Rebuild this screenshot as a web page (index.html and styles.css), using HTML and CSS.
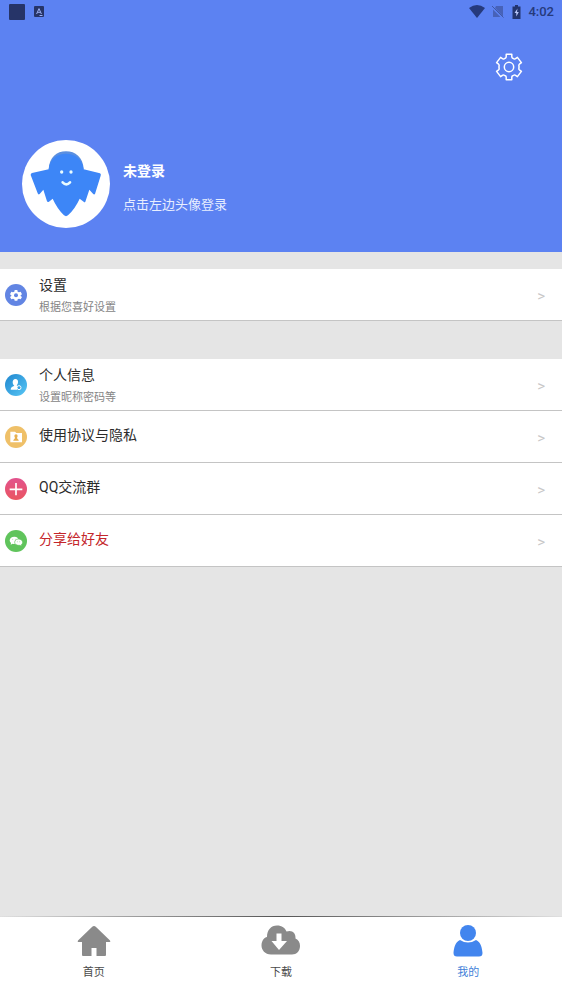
FILE: index.html
```html
<!DOCTYPE html>
<html lang="zh-CN">
<head>
<meta charset="utf-8">
<meta name="viewport" content="width=device-width, initial-scale=1">
<title>我的</title>
<link rel="stylesheet" href="styles.css">
</head>
<body>
<div class="app">
  <header class="hero">
    <div class="status">
      <svg class="status-block" viewBox="0 0 16 16" aria-hidden="true"><rect width="16" height="16" rx="1" fill="#263468"/></svg>
      <svg class="status-app" viewBox="0 0 10 11" aria-hidden="true"><rect width="10" height="11" rx="1" fill="#263468"/><path d="M2.6 8 5 2.6 7.4 8M3.5 6.3h3M5.5 9.5h3" fill="none" stroke="#9db1f4" stroke-width="1"/></svg>
      <span class="spacer"></span>
      <svg class="status-wifi" viewBox="0 0 16 13" aria-hidden="true"><path d="M0 3Q8-3 16 3L8 13Z" fill="#263a7c"/></svg>
      <svg class="status-sim" viewBox="0 0 12 13" aria-hidden="true"><path d="M4 1h7v10.500L3 3Z M1 4.500 8.500 12H1Z" fill="#4762b8"/><path d="M0 1 11.500 12.500" stroke="#4059a6" stroke-width="1"/></svg>
      <svg class="status-battery" viewBox="0 0 9 14" aria-hidden="true"><path d="M3 0h3v1.500h2.500V14H.5V1.500H3Z" fill="#23346f"/><path d="M5.500 3.500 2.500 8h1.800v3.500L6.800 7H5Z" fill="#b7c5f7"/></svg>
      <span class="clock">4:02</span>
    </div>
    <div class="toolbar">
      <button class="gear" type="button" aria-label="设置">
        <svg viewBox="0 0 28 28" fill="none" stroke="#fff" stroke-width="1.500" stroke-linejoin="round" aria-hidden="true"><path d="M11.200 1.300h5.600v2.500q0 1 .9 1.400l1.200.6q.9.500 1.700-.1l1.800-1.300 4 5.200-2 1.600q-.7.600-.5 1.500.2 1.300 0 2.600-.2.900.5 1.500l2 1.600-4 5.200-1.800-1.300q-.8-.6-1.700-.1l-1.200.6q-.9.400-.9 1.400v2.500h-5.600v-2.500q0-1-.9-1.400l-1.200-.6q-.9-.5-1.700.1l-1.800 1.300-4-5.200 2-1.600q.7-.6.500-1.500-.2-1.300 0-2.600.2-.9-.5-1.500l-2-1.600 4-5.200 1.800 1.300q.8.600 1.700.1l1.200-.6q.9-.4.9-1.400Z"/><circle cx="14" cy="14" r="4.700"/></svg>
      </button>
    </div>
    <div class="profile">
      <button class="avatar" type="button" aria-label="登录">
        <svg viewBox="0 5 264 264" aria-hidden="true">
          <circle cx="132" cy="137" r="132" fill="#fff"/>
          <path d="M80 93C82 56 104 39 132 39S183 56 185 93Z" fill="#5a8fe0"/>
          <path d="M80 93C84 60 106 46 132 46S181 60 185 93L234 105Q238 107 236 112L219 167Q216 170 213 166L202 154 190 190Q188 193 185 190L173 181Q160 210 138 231Q132 236 126 231Q105 210 92 181L81 190Q77 193 75 189L64 154 53 167Q49 170 47 165L26 110Q26 106 30 104Z" fill="#3d86f7"/>
          <circle cx="119" cy="101" r="5" fill="#e9fbff"/><circle cx="147" cy="101" r="5" fill="#e9fbff"/>
          <path d="M122 132Q133 144 144 132" fill="none" stroke="#e9fbff" stroke-width="8" stroke-linecap="round"/>
        </svg>
      </button>
      <div class="identity">
        <h1 class="name">未登录</h1>
        <p class="hint">点击左边头像登录</p>
      </div>
    </div>
  </header>

  <main class="content">
    <section class="group">
      <a class="row" href="#settings">
        <svg class="icon" viewBox="0 0 66 66" aria-hidden="true"><circle cx="33" cy="33" r="33" fill="#6285e3"/><path d="M29 18h8l1 5 4 2 5-2 4 8-4 3v2l4 3-4 7-5-2-4 2-1 4h-8l-1-4-4-2-5 2-4-7 4-3v-2l-4-3 4-8 5 2 4-2Z" fill="#fff"/><circle cx="33" cy="34" r="6" fill="#6285e3"/></svg>
        <span class="label label-double"><span class="title">设置</span><span class="sub">根据您喜好设置</span></span>
        <span class="arrow">&gt;</span>
      </a>
    </section>
    <section class="group">
      <a class="row" href="#profile">
        <svg class="icon" viewBox="0 0 66 66" aria-hidden="true"><defs><linearGradient id="sky" x1="0" y1="0" x2="1" y2="1"><stop offset="0" stop-color="#1f86cf"/><stop offset="1" stop-color="#58c7f5"/></linearGradient></defs><circle cx="33" cy="33" r="33" fill="url(#sky)"/><path d="M31 15c6 0 9 4 8 10 0 4-2 7-4 9l3 3-2 10H17q0-6 4-8l7-4c-3-2-5-6-5-10 0-6 3-10 8-10Z" fill="#fff"/><circle cx="42" cy="41" r="6" fill="#37a4e4" stroke="#fff" stroke-width="3"/></svg>
        <span class="label label-double"><span class="title">个人信息</span><span class="sub">设置昵称密码等</span></span>
        <span class="arrow">&gt;</span>
      </a>
      <a class="row" href="#terms">
        <svg class="icon" viewBox="0 0 66 66" aria-hidden="true"><circle cx="33" cy="33" r="33" fill="#efc068"/><path d="M16 17h14l4 4h17v28H16Z" fill="#fff"/><circle cx="33" cy="30" r="5" fill="#e7b04f"/><path d="M30 33h6l1 5 4 4v2H25v-2l4-4Z" fill="#e7b04f"/></svg>
        <span class="label"><span class="title">使用协议与隐私</span></span>
        <span class="arrow">&gt;</span>
      </a>
      <a class="row" href="#group">
        <svg class="icon" viewBox="0 0 66 66" aria-hidden="true"><defs><linearGradient id="rose" x1="0" y1="0" x2="0" y2="1"><stop offset="0" stop-color="#e2528d"/><stop offset="1" stop-color="#ea5661"/></linearGradient></defs><circle cx="33" cy="33" r="33" fill="url(#rose)"/><path d="M33 15v37M14 34h38" stroke="#fff" stroke-width="5"/></svg>
        <span class="label"><span class="title">QQ交流群</span></span>
        <span class="arrow">&gt;</span>
      </a>
      <a class="row" href="#share">
        <svg class="icon" viewBox="0 0 66 66" aria-hidden="true"><circle cx="33" cy="33" r="33" fill="#60c45c"/><path d="M28 20c8 0 13 5 13 11s-5 11-13 11q-3 0-5-1l-6 3 1-5q-4-3-4-8c0-6 6-11 14-11Z" fill="#fff"/><path d="M40 27c7 0 13 4 13 10q0 4-4 7l1 5-5-3h-4c-7 0-12-4-12-9s4-10 11-10Z" fill="#fff" stroke="#60c45c" stroke-width="2"/><g fill="#a5dea2"><circle cx="23" cy="28" r="1.500"/><circle cx="32" cy="28" r="1.500"/><circle cx="37" cy="35" r="1.500"/><circle cx="44" cy="35" r="1.500"/></g></svg>
        <span class="label"><span class="title title-alert">分享给好友</span></span>
        <span class="arrow">&gt;</span>
      </a>
    </section>
  </main>

  <nav class="tabs">
    <a class="tab" href="#home">
      <svg viewBox="0 0 40 34" aria-hidden="true"><path d="M20 2q1 0 2 1L36 16.500q1 1.500-.5 1.500H32v13q0 1-1 1h-8.500v-8h-5v8H9q-1 0-1-1V18H4.500Q3 18 4 16.500L18 3q1-1 2-1Z" fill="#8a8a8a"/></svg>
      <span>首页</span>
    </a>
    <a class="tab" href="#download">
      <svg viewBox="0 0 40 34" aria-hidden="true"><path d="M10 30.500C4 30.500.5 26 .5 21.500c0-5 3-8 5.500-8.500C6 6 10 1.500 16 1.500c5 0 8 2.500 9.500 6C31 5.500 35 9 34.500 14.500c3 1.500 4.500 4 4.500 7.500 0 5-3.500 8.500-8 8.500Z" fill="#8a8a8a"/><path d="M15.500 9.500h5V17H26l-8 9-7.500-9h5Z" fill="#fff"/></svg>
      <span>下载</span>
    </a>
    <a class="tab tab-active" href="#me" aria-current="page">
      <svg viewBox="0 0 40 34" aria-hidden="true"><circle cx="20" cy="9" r="8" fill="#4285ee"/><path d="M12 16Q20 21 28 16C33 18 34 24 34.500 29Q34.500 32.500 31 32.500H9Q5.500 32.500 5.500 29C6 24 7 18 12 16Z" fill="#4285ee"/></svg>
      <span>我的</span>
    </a>
  </nav>
</div>
</body>
</html>
```
FILE: styles.css
```css
* {
  box-sizing: border-box;
}

body {
  margin: 0;
  font-family: Roboto, "Noto Sans CJK SC", sans-serif;
  background: #e5e5e5;
  color: #2b2b2b;
}

a {
  color: inherit;
  text-decoration: none;
}

button {
  padding: 0;
  border: 0;
  background: none;
  cursor: pointer;
}

svg {
  display: block;
  flex: none;
}

.app {
  display: flex;
  flex-direction: column;
  min-height: 100vh;
}

.hero {
  padding-bottom: 24px;
  background: #5c82f2;
  color: #fff;
}

.status {
  display: flex;
  align-items: center;
  height: 23px;
  padding: 0 8px 0 9px;
}

.status-block {
  width: 16px;
  height: 16px;
  margin-right: 9px;
}

.status-app {
  width: 10px;
  height: 11px;
}

.spacer {
  flex: 1;
}

.status-wifi {
  width: 16px;
  height: 13px;
  margin-right: 7px;
}

.status-sim {
  width: 12px;
  height: 13px;
  margin-right: 8px;
}

.status-battery {
  width: 9px;
  height: 14px;
  margin-right: 7px;
}

.clock {
  font-size: 13px;
  font-weight: 500;
  line-height: 23px;
  color: #263a7c;
}

.toolbar {
  display: flex;
  justify-content: flex-end;
  padding: 30px 39px 59px;
}

.gear svg {
  width: 28px;
  height: 28px;
}

.profile {
  display: flex;
  align-items: center;
  gap: 13px;
  padding: 0 22px;
}

.avatar svg {
  width: 88px;
  height: 88px;
}

.identity {
  display: flex;
  flex-direction: column;
  gap: 14px;
  padding-top: 7px;
}

.name {
  margin: 0;
  font-size: 14px;
  font-weight: 700;
  line-height: 20px;
}

.hint {
  margin: 0;
  font-size: 13px;
  line-height: 20px;
  color: #e8eeff;
}

.content {
  display: flex;
  flex: 1;
  flex-direction: column;
  gap: 38px;
  padding: 17px 0;
}

.group {
  background: #fff;
}

.row {
  display: flex;
  align-items: center;
  gap: 12px;
  height: 52px;
  padding: 0 17px 0 5px;
  border-bottom: 1px solid #c4c4c4;
}

.icon {
  width: 22px;
  height: 22px;
}

.label {
  display: flex;
  flex: 1;
  flex-direction: column;
  gap: 4px;
  padding-bottom: 3px;
}

.label-double {
  padding-top: 2px;
  padding-bottom: 0;
}

.title {
  font-size: 14px;
  line-height: 20px;
}

.title-alert {
  color: #c4262b;
}

.sub {
  font-size: 11px;
  line-height: 18px;
  color: #858585;
}

.arrow {
  padding-top: 3px;
  font-size: 15px;
  line-height: 20px;
  color: #c8c8c8;
}

.tabs {
  display: grid;
  grid-template-columns: repeat(3, 1fr);
  height: 84px;
  padding-top: 8px;
  background: linear-gradient(90deg, #e0e0e0, #555 50%, #e0e0e0) top / 100% 1px no-repeat, #fff;
}

.tab {
  display: flex;
  flex-direction: column;
  align-items: center;
  gap: 6px;
  font-size: 11px;
  line-height: 18px;
  color: #4a4a4a;
}

.tab svg {
  width: 40px;
  height: 34px;
}

.tab-active {
  color: #3f7fd8;
}
```
